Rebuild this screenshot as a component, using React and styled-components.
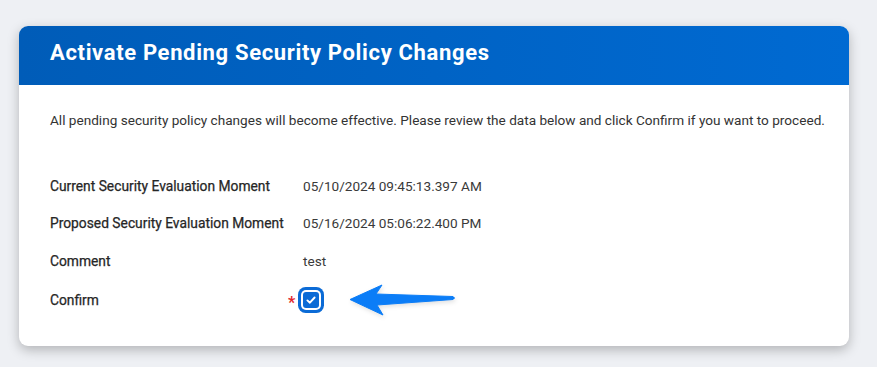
import React from "react";
import styled, { createGlobalStyle } from "styled-components";

const Global = createGlobalStyle`
  html, body {
    margin: 0;
    padding: 0;
    background: #eef0f4;
    font-family: Roboto, "Liberation Sans", Arial, sans-serif;
  }
`;

const rows = [
  { label: "Current Security Evaluation Moment", value: "05/10/2024 09:45:13.397 AM" },
  { label: "Proposed Security Evaluation Moment", value: "05/16/2024 05:06:22.400 PM" },
  { label: "Comment", value: "test" },
];

const App = () => {
  return (
    <>
      <Global />
      <Styles.Page>
        <Styles.Card>
          <Styles.Header>Activate Pending Security Policy Changes</Styles.Header>
          <Styles.Body>
            <Styles.Intro>
              All pending security policy changes will become effective. Please review the data below
              and click Confirm if you want to proceed.
            </Styles.Intro>
            <Styles.Fields>
              {rows.map((r) => (
                <Styles.Row key={r.label}>
                  <div className="th">{r.label}</div>
                  <div className="td">{r.value}</div>
                </Styles.Row>
              ))}
              <Styles.Row $confirm>
                <div className="th">Confirm</div>
                <div className="td">
                  <Styles.Required>*</Styles.Required>
                  <Styles.Check>
                    <svg width="12" height="12" viewBox="0 0 12 12">
                      <path
                        d="M2.4 6.4 L4.9 8.7 L9.6 3.5"
                        fill="none"
                        stroke="#fff"
                        strokeWidth="1.9"
                        strokeLinecap="round"
                        strokeLinejoin="round"
                      />
                    </svg>
                  </Styles.Check>
                  <Styles.Arrow width="106" height="32" viewBox="0 0 106 32">
                    <path
                      d="M0 15.5 L32 1 L26 10 L103 12.5 Q106 14 103 15.5 L27 21 L33 31 Z"
                      fill="#0b7df7"
                      strokeLinejoin="round"
                      stroke="#0b7df7"
                      strokeWidth="1"
                    />
                  </Styles.Arrow>
                </div>
              </Styles.Row>
            </Styles.Fields>
          </Styles.Body>
        </Styles.Card>
      </Styles.Page>
    </>
  );
};

// styled
const Styles = {
  Page: styled.div`
    width: 877px;
    height: 367px;
    padding: 26px 28px 0 19px;
    box-sizing: border-box;
  `,
  Card: styled.div`
    width: 830px;
    height: 320px;
    background: #fff;
    border-radius: 9px;
    overflow: hidden;
    box-shadow: 0 4px 12px rgba(0, 0, 0, 0.25);
  `,
  Header: styled.div`
    height: 59px;
    box-sizing: border-box;
    padding: 14px 31px 0;
    background: linear-gradient(90deg, #005cb8, #006ad2);
    color: #fff;
    font-size: 22px;
    font-weight: 700;
    line-height: 26px;
    letter-spacing: 0.65px;
  `,
  Body: styled.div`
    padding: 26px 31px 0;
    color: #333;
  `,
  Intro: styled.p`
    margin: 0;
    font-size: 13.6px;
    line-height: 18px;
    color: #333;
    white-space: nowrap;
  `,
  Fields: styled.div`
    margin-top: 38px;
    display: flex;
    flex-direction: column;
  `,
  Row: styled.div`
    display: grid;
    grid-template-columns: 253px auto;
    align-items: center;
    height: ${(p) => (p.$confirm ? "40px" : "37.5px")};
    font-size: 13.6px;
    color: #333;
    .th {
      font-size: 13.8px;
      font-weight: 400;
      color: #262626;
      -webkit-text-stroke: 0.25px #262626;
    }
    .td {
      position: relative;
      display: flex;
      align-items: center;
      color: #3a3a3a;
      margin-left: ${(p) => (p.$confirm ? "-15px" : "0")};
    }
  `,
  Required: styled.span`
    color: #e0262c;
    font-size: 16px;
    font-weight: 700;
    width: 10px;
    margin-top: 6px;
  `,
  Check: styled.span`
    display: inline-flex;
    align-items: center;
    justify-content: center;
    width: 16px;
    height: 16px;
    margin: 0 5px;
    background: #0b6bd6;
    border-radius: 3px;
    box-shadow: 0 0 0 2px #fff, 0 0 0 5px #0b6bd6;
  `,
  Arrow: styled.svg`
    position: absolute;
    left: 62px;
    top: -3px;
    filter: drop-shadow(1px 2px 2px rgba(0, 0, 0, 0.12));
  `,
};

export default App;
